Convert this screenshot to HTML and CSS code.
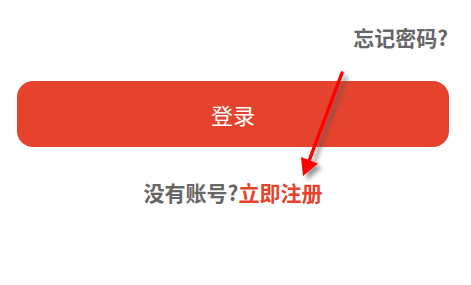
FILE: index.html
```html
<!DOCTYPE html>
<html lang="zh">
<head>
<meta charset="utf-8">
<link rel="stylesheet" href="styles.css">
</head>
<body>
<div class="page">
  <div class="forgot-row"><span class="forgot">忘记密码?</span></div>
  <button class="login-btn">登录</button>
  <div class="register-row"><span class="muted">没有账号?</span><span class="link">立即注册</span></div>
</div>
<svg class="arrow" width="471" height="285" viewBox="0 0 471 285">
  <defs>
    <filter id="sh" x="-50%" y="-50%" width="200%" height="200%">
      <feDropShadow dx="4" dy="4" stdDeviation="2" flood-color="#555" flood-opacity="0.6"/>
    </filter>
  </defs>
  <g filter="url(#sh)">
    <line x1="342" y1="73" x2="309" y2="161" stroke="#ff0000" stroke-width="3.5" stroke-linecap="round"/>
    <polygon points="303,176 301,157 318,163.5" fill="#ff0000"/>
  </g>
</svg>
</body>
</html>
```
FILE: styles.css
```css
html, body {
  margin: 0;
  padding: 0;
  background: #ffffff;
}
body {
  width: 471px;
  height: 285px;
  overflow: hidden;
  position: relative;
  font-family: "Noto Sans CJK SC", "Noto Sans", sans-serif;
}
.page {
  display: flex;
  flex-direction: column;
  padding: 23px 22px 0 17px;
}
.forgot-row {
  display: flex;
  justify-content: flex-end;
  height: 28px;
  line-height: 28px;
}
.forgot {
  font-size: 21px;
  font-weight: 700;
  color: #666666;
  margin-right: 1px;
}
.login-btn {
  margin-top: 30px;
  height: 66px;
  width: 100%;
  border: none;
  border-radius: 16px;
  background: #e5432d;
  color: #ffffff;
  font-family: "Noto Sans CJK SC", "Noto Sans", sans-serif;
  font-size: 22px;
  font-weight: 400;
  padding: 0;
}
.register-row {
  margin-top: 31px;
  display: flex;
  justify-content: center;
  height: 28px;
  line-height: 28px;
  font-size: 21px;
  font-weight: 700;
}
.muted {
  color: #666666;
}
.link {
  color: #e5432d;
}
.arrow {
  position: absolute;
  left: 0;
  top: 0;
  pointer-events: none;
}
```
